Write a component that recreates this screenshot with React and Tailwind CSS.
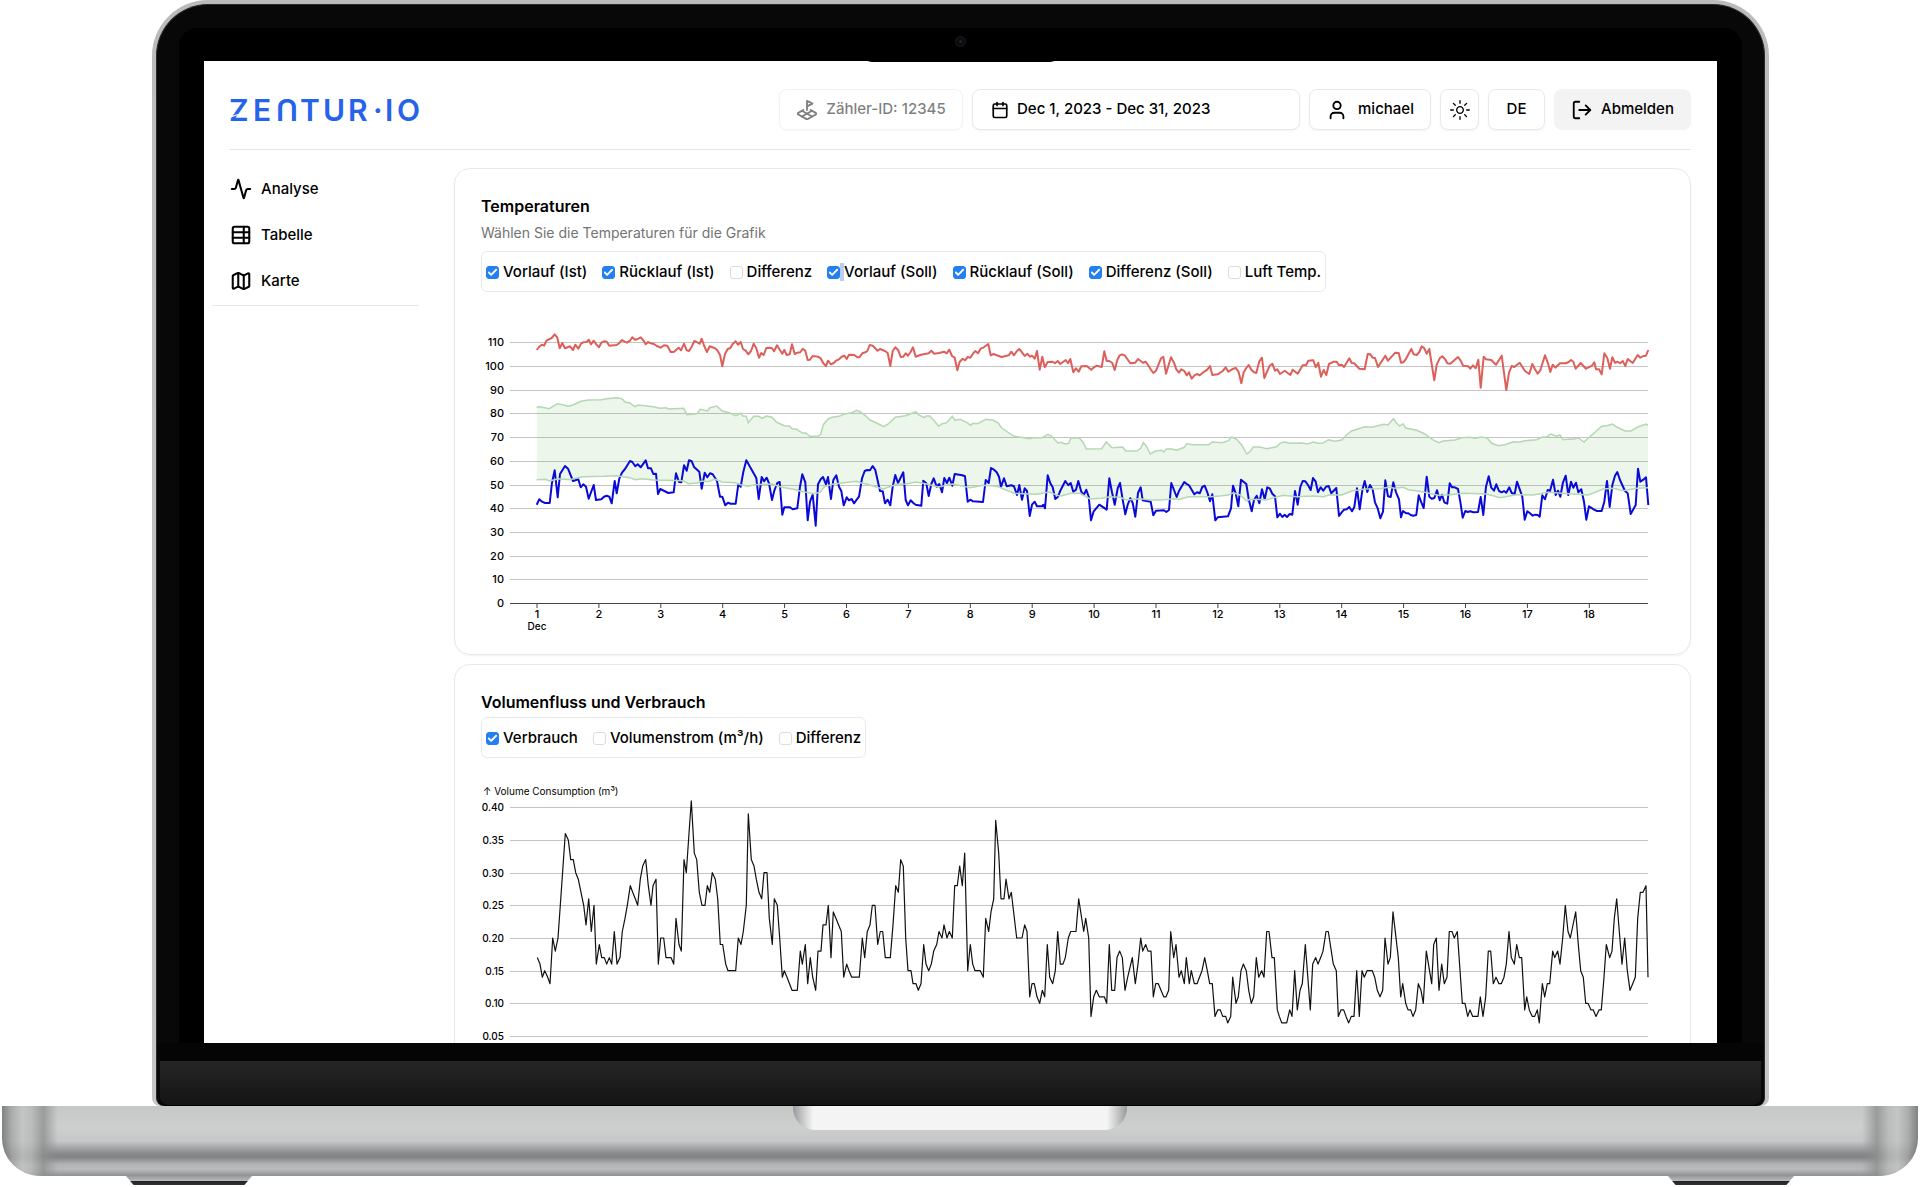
import React from "react";
import { Activity, Calendar, Check, LandPlot, LogOut, Map as MapIcon, TableProperties, User } from "lucide-react";
import { RxSun } from "react-icons/rx";

/* Each series is kept in three consecutive windows, 1170 units wide, three units to a chart pixel. */
const WINDOW = 1170;
const ORIGIN = 33;

function parse(windows) {
  return windows.flatMap((text, i) =>
    text
      .trim()
      .split(/\s+/)
      .map((pair) => {
        const [x, y] = pair.split(",").map(Number);
        return [(x + i * WINDOW - ORIGIN) / 3, y];
      })
  );
}

function line(points) {
  return "M" + points.map(([x, y]) => `${x.toFixed(1)},${y.toFixed(1)}`).join("L");
}

const third = ([x, y]) => [x, y / 3];

const flow = parse([
  `200,150 207,141 215,134 222,137 230,121 245,114 254,103 262,113 269,145 277,129 285,145 300,139 309,150 316,134 325,146 333,131 340,127 350,126 356,119 363,133 371,122 379,133 387,142 394,128 402,124 410,125 418,137 440,135 448,129 456,120 464,125 471,128 480,122 487,112 495,119 503,117 512,112 520,121 527,133 534,126 542,130 552,132 560,138 572,143 582,136 592,137 602,156 611,156 626,143 633,151 642,131 650,151 657,153 665,140 673,123 682,127 689,131 695,116 703,139 711,156 719,139 735,145 742,151 750,165 757,199 765,162 773,147 781,144 788,132 797,124 804,134 812,126 819,147 827,152 835,163 843,153 851,131 859,145 867,173 874,159 881,165 889,144 898,143 906,145 912,154 921,136 929,149 937,161 943,150 950,165 959,163 966,133 974,162 982,158 991,157 998,146 1006,152 1013,180 1020,179 1028,168 1044,170 1052,175 1060,190 1068,198 1074,182 1083,193 1091,189 1098,182 1107,178 1115,170 1123,167 1130,177 1137,164 1153,165 1162,172 1168,172`,
  `7,160 16,157 22,153 29,135 38,137 53,152 60,147 75,153 83,159 91,198 98,153 106,142 115,151 122,171 130,170 137,160 144,167 152,155 159,142 167,170 183,164 206,160 214,152 223,161 237,159 252,155 260,160 268,149 276,168 284,173 292,211 299,185 308,176 315,181 323,171 331,173 339,161 346,153 354,160 362,146 371,142 385,132 392,166 400,162 425,171 446,166 454,155 462,166 470,154 478,147 486,157 494,168 502,161 510,170 516,167 524,176 531,153 539,209 547,170 554,202 563,186 578,185 585,190 593,183 601,192 617,180 624,190 631,177 640,217 648,205 656,215 664,199 680,198 694,209 702,202 710,197 725,201 733,154 740,183 748,183 757,189 764,210 772,180 779,166 786,163 795,167 811,190 826,188 834,177 849,188 857,185 864,195 873,209 880,219 888,212 903,175 910,170 918,221 933,172 942,188 949,208 957,218 964,208 973,213 980,226 987,217 995,236 1003,227 1011,222 1019,226 1034,214 1042,209 1050,198 1057,225 1073,223 1088,213 1097,202 1105,215 1120,206 1128,204 1136,217 1144,250 1151,217 1159,204 1166,195`,
  `4,209 12,217 19,219 28,184 36,173 43,234 59,197 67,191 75,212 82,208 90,222 104,212 121,225 128,209 143,221 158,196 168,196 175,182 190,181 197,202 205,188 213,230 221,210 229,225 237,192 251,185 260,185 267,196 275,194 282,201 298,175 305,189 313,190 328,206 344,208 353,162 361,163 368,173 375,174 384,201 406,167 414,182 436,158 446,159 453,188 460,187 467,178 484,147 491,163 500,165 508,156 515,139 523,145 530,161 538,147 553,241 560,194 569,175 577,169 585,177 592,190 601,191 624,171 632,182 639,197 655,199 661,206 669,196 677,205 685,179 692,263 701,170 708,178 724,180 738,194 755,167 769,270 777,218 785,198 793,201 809,188 825,213 838,222 847,192 855,208 863,221 871,211 885,166 894,190 901,216 908,194 916,203 930,190 947,190 955,187 963,180 970,185 977,206 992,189 1008,206 1026,197 1033,187 1038,208 1047,208 1055,223 1063,160 1072,174 1080,206 1087,172 1095,188 1103,185 1110,190 1118,183 1126,198 1133,177 1148,189 1163,165 1171,173 1180,168 1188,167 1195,150`,
]).map(third);

const upper = parse([
  `200,322 209,320 224,323 238,326 262,311 278,314 294,319 309,315 333,304 355,300 394,299 410,296 440,293 456,296 465,306 480,309 494,320 505,315 550,320 570,325 588,323 595,327 641,325 651,344 682,341 690,328 712,333 720,323 740,318 757,333 780,339 797,347 812,340 819,349 829,349 835,368 851,349 866,349 877,355 890,348 906,352 920,367 943,377 958,378 966,386 980,388 998,400 1006,398 1020,409 1045,408 1052,403 1060,374 1075,356 1090,351 1108,349 1120,343 1145,338 1160,331`,
  `0,335 15,346 30,360 50,369 71,380 85,372 106,352 137,347 168,335 175,344 192,353 199,348 209,348 220,359 236,379 245,372 260,368 277,349 285,361 300,358 320,367 331,375 340,370 353,371 377,358 400,361 415,369 425,384 462,409 510,416 520,413 547,413 564,403 575,409 594,429 603,427 615,432 626,430 633,413 658,414 670,428 679,447 725,446 739,426 756,443 788,441 797,453 830,453 842,445 850,428 858,437 871,462 887,453 905,451 911,456 919,447 935,447 950,451 973,442 980,431 1000,434 1046,434 1057,426 1087,428 1105,422 1115,411 1130,418 1145,435 1160,462`,
  `0,455 10,441 30,441 50,446 65,443 80,440 90,430 103,426 120,430 155,429 173,432 189,426 205,430 220,429 235,419 255,424 275,420 290,404 305,393 345,380 365,382 402,373 414,375 430,356 440,370 449,378 459,371 467,384 500,391 525,402 535,410 553,422 567,428 580,423 615,420 635,413 660,412 675,415 695,411 712,415 725,430 745,437 765,434 790,425 805,427 825,422 860,419 875,412 892,410 902,402 920,409 930,405 940,419 960,417 970,418 985,414 1002,426 1015,414 1035,397 1055,379 1070,377 1087,372 1102,382 1125,393 1143,393 1165,380 1188,372 1194,376`,
]).map(third);

const lower = parse([
  `200,539 225,538 240,543 265,536 300,539 320,534 340,530 400,529 440,527 480,533 497,539 515,536 550,540 640,542 655,551 682,549 695,543 712,545 735,538 757,546 795,548 812,554 835,559 855,554 905,552 935,562 970,568 1000,575 1030,581 1050,577 1063,560 1090,552 1160,544`,
  `0,548 20,552 50,562 70,567 110,553 137,552 168,546 200,552 235,561 277,552 331,563 370,556 410,559 462,580 530,583 567,576 600,589 633,580 660,580 690,597 725,595 750,590 780,592 800,600 840,596 870,600 905,600 940,596 960,598 985,590 1050,590 1080,588 1105,585 1120,578 1140,585 1160,603`,
  `0,598 50,599 100,586 140,590 190,588 220,590 240,584 275,585 305,573 345,567 390,566 415,562 435,565 460,562 475,569 510,574 565,586 600,584 640,580 710,582 750,593 800,584 850,585 895,577 935,580 980,583 1015,585 1060,567 1090,565 1120,572 1160,565 1194,563`,
]).map(third);

const returnFlow = parse([
  `200,614 208,598 216,605 225,609 239,609 246,548 254,511 263,592 270,522 285,498 294,506 309,543 325,538 332,562 340,553 348,560 356,596 371,555 378,600 394,598 402,590 410,587 418,590 425,610 434,543 440,580 448,536 456,518 465,507 480,483 487,486 496,499 503,493 512,502 527,481 534,505 543,505 550,522 558,521 564,582 571,567 595,579 611,577 618,520 627,546 634,547 642,496 650,512 657,481 665,484 673,502 688,515 695,566 704,518 712,532 720,520 728,523 741,543 750,590 757,590 766,616 774,608 782,611 797,611 805,553 812,560 820,516 829,481 859,534 866,597 875,531 882,544 890,533 897,550 906,600 913,572 922,549 929,546 937,644 943,622 960,622 968,628 982,625 990,560 997,523 1006,547 1013,661 1020,605 1028,584 1037,677 1044,553 1052,538 1059,531 1068,553 1074,531 1083,597 1090,540 1099,526 1107,560 1114,573 1121,616 1130,592 1137,601 1145,597 1152,610 1160,599 1167,590`,
  `6,535 14,513 22,510 30,511 38,498 46,510 60,573 68,574 75,610 83,599 91,616 98,560 106,525 114,549 130,517 137,600 144,616 152,601 160,609 167,614 184,617 190,542 199,550 206,588 214,552 221,535 230,560 238,552 246,577 253,534 261,549 268,533 277,557 284,522 307,526 315,529 323,605 331,599 339,604 369,606 377,540 386,549 393,504 402,509 410,517 417,530 423,560 432,535 440,559 454,556 462,559 471,585 478,555 486,599 494,565 501,573 509,648 516,614 524,605 531,619 546,619 550,614 555,625 563,526 571,550 578,562 586,597 594,590 601,572 616,543 625,556 632,549 640,575 648,569 655,543 664,575 671,585 679,569 686,590 693,661 701,634 718,614 740,629 748,535 756,577 764,614 773,565 780,549 787,592 796,643 803,614 811,595 818,609 826,650 834,579 842,562 848,601 872,605 880,646 888,632 912,631 919,636 927,630 934,549 950,591 957,573 973,546 980,552 987,556 1003,583 1011,577 1019,580 1027,561 1034,557 1042,577 1050,604 1057,583 1066,661 1073,652 1104,649 1113,625 1119,557 1127,580 1135,619 1143,539 1159,552 1166,597`,
  `5,634 12,600 20,587 28,610 36,568 44,598 52,562 59,565 67,581 75,589 82,652 90,641 97,651 104,644 111,651 119,642 127,644 135,573 143,614 151,561 158,543 166,544 174,555 182,570 189,534 197,545 204,577 212,562 220,572 228,560 236,558 244,580 259,564 267,648 275,637 282,629 290,628 298,621 306,634 313,621 321,565 329,628 337,571 344,543 352,576 360,555 368,569 375,607 383,625 391,655 399,635 406,541 414,589 422,591 430,547 438,577 447,598 453,652 459,633 468,640 475,640 482,645 490,647 499,645 506,586 514,607 521,624 530,530 538,590 545,596 553,594 561,571 569,601 576,584 583,607 592,611 599,550 606,562 614,562 624,567 631,605 638,653 646,633 653,636 661,634 670,637 684,636 692,591 700,645 708,560 716,529 724,563 732,572 739,553 747,573 755,577 762,573 769,578 778,562 785,579 794,581 801,545 817,590 824,659 832,634 840,640 848,647 855,644 863,645 869,650 877,586 885,598 893,570 900,573 909,539 917,585 924,572 931,590 939,547 947,527 955,585 963,545 970,563 978,548 985,577 994,568 1002,605 1009,659 1017,619 1032,629 1041,633 1055,633 1063,605 1071,543 1079,621 1087,556 1095,527 1102,516 1110,540 1125,573 1133,580 1142,642 1157,615 1164,506 1171,545 1180,539 1188,532 1195,615`,
]).map(third);

/* Consumption in hundredths of a cubic metre. */
const volume = parse([
  `202,17 210,16 217,14 224,15 233,14 240,13 248,20 256,18 264,20 271,25 286,36 295,35 302,32 310,32 317,30 325,29 333,27 341,25 348,22 356,26 364,21 372,25 379,16 388,19 395,17 403,17 410,16 418,17 425,16 433,21 441,16 450,17 457,21 465,23 472,25 481,28 488,27 496,26 503,25 511,29 518,31 527,32 535,28 543,25 549,28 558,29 565,16 572,20 581,20 588,17 603,17 611,16 618,23 627,19 634,18 642,32 649,30 657,36 664,41 673,33 680,32 688,27 696,25 705,25 712,28 719,27 727,30 736,29 743,26 751,19 758,19 767,16 774,15 797,15 805,20 813,19 820,21 829,25 835,39 844,32 852,31 859,29 867,27 875,26 882,30 891,30 898,23 907,19 913,26 922,25 929,20 937,14 943,15 951,14 966,12 982,12 991,18 997,16 1006,19 1013,13 1021,17 1028,14 1037,12 1044,18 1053,18 1059,22 1068,22 1075,25 1083,17 1090,24 1098,23 1114,21 1121,14 1130,16 1137,15 1145,14 1168,14`,
  `7,20 14,17 22,21 30,22 37,25 45,25 53,19 61,21 68,21 76,17 91,17 99,22 107,28 115,27 122,32 130,31 137,20 144,15 153,15 159,13 168,13 175,12 183,13 191,19 198,16 206,15 214,16 221,18 230,19 237,21 246,20 252,22 261,20 268,21 277,20 284,28 292,28 299,31 307,28 314,33 323,15 331,19 338,16 345,15 361,15 370,14 377,23 386,21 393,24 401,26 407,38 416,33 423,26 432,26 438,29 447,26 454,27 470,20 486,20 494,22 501,21 509,11 516,13 523,13 531,11 539,10 547,12 554,11 562,19 569,14 578,13 586,15 593,21 601,16 609,16 616,17 625,20 632,21 648,21 656,26 671,21 677,23 686,20 693,8 701,11 709,12 718,11 733,11 740,10 748,19 755,12 764,12 771,17 779,18 787,17 795,12 803,14 817,17 826,13 834,16 842,20 848,18 857,19 864,18 873,18 880,11 887,13 895,13 903,12 911,11 918,11 926,12 932,21 941,17 948,19 957,14 964,15 973,13 979,17 988,13 994,15 1003,13 1011,13 1026,15 1034,17 1042,15 1049,13 1057,13 1065,8 1073,9 1081,9 1088,8 1097,8 1103,7 1112,8 1118,14 1128,10 1135,11 1143,15 1150,16 1159,15 1166,12`,
  `4,10 11,11 19,17 26,14 35,15 42,14 50,21 57,21 66,17 73,17 82,9 88,8 95,7 110,7 119,9 126,8 134,15 142,9 150,12 157,13 166,19 181,9 188,16 197,17 204,16 212,17 219,18 228,21 235,21 250,16 259,15 265,8 273,9 281,9 288,8 296,7 304,8 312,8 320,15 328,8 336,15 343,14 351,15 367,15 374,14 382,12 390,11 398,12 405,20 414,16 421,17 429,24 445,17 452,11 458,13 467,10 474,9 482,9 489,8 497,9 505,13 513,12 520,10 529,18 545,13 551,19 559,20 567,12 575,16 583,13 591,14 598,21 606,21 613,20 622,21 637,10 645,10 653,8 660,9 668,8 684,8 691,11 699,8 707,11 715,18 722,18 730,13 738,14 747,13 754,13 762,14 769,16 777,21 784,17 793,16 800,19 808,17 815,17 824,9 830,11 838,9 847,8 854,8 862,9 868,7 877,13 884,11 892,13 899,13 908,18 914,17 923,18 930,16 938,20 946,25 954,21 961,20 977,24 985,19 992,15 1000,14 1007,10 1014,10 1023,9 1030,9 1038,8 1047,9 1054,9 1062,14 1069,19 1079,17 1086,18 1093,23 1100,26 1108,21 1116,16 1124,20 1132,15 1140,12 1148,13 1156,14 1163,23 1171,27 1179,27 1188,28 1194,14`,
]).map(([x, v]) => [x, (866 - v * 19.6) / 3]);

const DAYS = Array.from({ length: 18 }, (_, i) => i + 1);
const DEGREES = Array.from({ length: 12 }, (_, i) => i * 10);
const VOLUMES = [0.4, 0.35, 0.3, 0.25, 0.2, 0.15, 0.1, 0.05];
const dayX = (d) => 56 + (d - 1) * 61.9;
const degreeY = (t) => 303 - t * 2.37;
const volumeY = (v) => (866 - v * 1960) / 3;

function GridLine({ y }) {
  return <line x1="29" x2="1167" y1={y} y2={y} stroke="#c4c4c4" strokeWidth="1" />;
}

function AxisLabel({ y, children }) {
  return (
    <text x="23" y={y + 4} textAnchor="end" className="fill-black text-[11px] font-medium">
      {children}
    </text>
  );
}

function TemperatureChart() {
  return (
    <svg viewBox="0 0 1183 332" className="mt-2 block w-full" role="img" aria-label="Temperaturen">
      {DEGREES.map((t) => (
        <g key={t}>
          {t > 0 && <GridLine y={Math.round(degreeY(t)) + 0.5} />}
          <AxisLabel y={degreeY(t)}>{t}</AxisLabel>
        </g>
      ))}
      <path d={line(upper) + "L" + line([...lower].reverse()).slice(1) + "Z"} fill="#48a838" fillOpacity="0.1" />
      <path d={line(flow)} fill="none" stroke="#dd5f5a" strokeWidth="2" strokeLinejoin="round" />
      <path d={line(returnFlow)} fill="none" stroke="#0a0ad8" strokeWidth="2" strokeLinejoin="round" />
      <path d={line(upper)} fill="none" stroke="#b4d8b2" strokeWidth="1.5" />
      <path d={line(lower)} fill="none" stroke="#b4d8b2" strokeWidth="1.5" />
      <line x1="29" x2="1167" y1="303.5" y2="303.5" stroke="#444" strokeWidth="1" />
      {DAYS.map((d) => (
        <g key={d}>
          <line x1={dayX(d)} x2={dayX(d)} y1="303" y2="308" stroke="#444" strokeWidth="1" />
          <text x={dayX(d)} y="318" textAnchor="middle" className="fill-black text-[11px] font-medium">
            {d}
          </text>
        </g>
      ))}
      <text x="56" y="330" textAnchor="middle" className="fill-black text-[10px] font-medium">
        Dec
      </text>
    </svg>
  );
}

function VolumeChart() {
  return (
    <svg viewBox="0 0 1183 263" className="mt-[22px] block w-full" role="img" aria-label="Volume Consumption">
      <text x="2" y="15" className="fill-black text-[10px]">
        ↑ Volume Consumption (m³)
      </text>
      {VOLUMES.map((v) => (
        <g key={v}>
          <GridLine y={Math.round(volumeY(v)) + 0.5} />
          <text x="23" y={volumeY(v) + 4} textAnchor="end" className="fill-black text-[10px] font-medium">
            {v.toFixed(2)}
          </text>
        </g>
      ))}
      <path d={line(volume)} fill="none" stroke="#111" strokeWidth="1.2" strokeLinejoin="round" />
    </svg>
  );
}

function Option({ label, checked, marked }) {
  return (
    <label className="flex items-center">
      <span className="grid place-items-center">
        <input
          type="checkbox"
          defaultChecked={checked}
          className="peer col-start-1 row-start-1 size-[13px] appearance-none rounded-[3px] border border-[#dcdcdc] bg-white checked:border-[#2380f0] checked:bg-[#2380f0]"
        />
        <Check className="pointer-events-none col-start-1 row-start-1 hidden size-[11px] text-white peer-checked:block" strokeWidth={4} />
      </span>
      <span className={marked ? "h-[18px] w-1 bg-[#b9cdf7]" : "h-[18px] w-1"} />
      {label}
    </label>
  );
}

function Options({ items }) {
  return (
    <div className="flex w-fit items-center gap-[15px] rounded-md border border-[#e9e9e9] px-1 pt-[9px] pb-2 text-[15px] leading-[22px] font-medium whitespace-nowrap">
      {items.map((item) => (
        <Option key={item.label} {...item} />
      ))}
    </div>
  );
}

const button =
  "flex h-[41px] items-center rounded-lg border border-[#e9e9e9] bg-white text-[15px] font-medium whitespace-nowrap shadow-xs";

function Logo() {
  return (
    <svg viewBox="0 0 192 26" className="h-[26px] w-48 overflow-visible" role="img" aria-label="ZENTUR.IO">
      <g className="fill-[#2563eb] text-[30px] font-semibold">
        <text y="24" x="0 24">ZE</text>
        <text y="24" x="58" textAnchor="middle" transform="rotate(180 58 13)">U</text>
        <text y="24" x="71 94 119 144 156 168">TUR·IO</text>
      </g>
      <path d="M0 20.5 9 17.5" stroke="#fff" strokeWidth="1.2" />
    </svg>
  );
}

function Header() {
  return (
    <header className="mr-[26px] ml-[25px] flex items-center border-b border-[#e5e5e5] pt-7 pb-[19px]">
      <a href="#home" className="mr-auto">
        <Logo />
      </a>
      <div className="flex gap-[9px]">
        <button disabled className={`${button} w-[184px] justify-center gap-2 opacity-50`}>
          <LandPlot className="size-[22px]" />
          Zähler-ID: 12345
        </button>
        <button className={`${button} w-[328px] gap-2 px-[18px]`}>
          <Calendar className="size-[18px]" strokeWidth={2.25} />
          Dec 1, 2023 - Dec 31, 2023
        </button>
        <button className={`${button} w-[122px] justify-center gap-2.5`}>
          <User className="size-[22px]" />
          michael
        </button>
        <button aria-label="Farbschema" className={`${button} w-[39px] justify-center`}>
          <RxSun className="size-5" />
        </button>
        <button className={`${button} w-[57px] justify-center`}>DE</button>
        <button className="flex h-[41px] w-[137px] items-center justify-center gap-2 rounded-lg bg-[#f3f3f3] text-[15px] font-medium">
          <LogOut className="size-[22px]" />
          Abmelden
        </button>
      </div>
    </header>
  );
}

const links = [
  { label: "Analyse", Icon: Activity },
  { label: "Tabelle", Icon: TableProperties },
  { label: "Karte", Icon: MapIcon },
];

function Sidebar() {
  return (
    <nav className="mt-4 ml-2 w-[207px] shrink-0 self-start border-b border-[#e8e8e8] pb-px">
      {links.map(({ label, Icon }) => (
        <a key={label} href={`#${label.toLowerCase()}`} className="flex h-[46px] items-center gap-[9px] pl-[18px] text-[15px] font-medium">
          <Icon className="size-[22px]" strokeWidth={2.25} />
          {label}
        </a>
      ))}
    </nav>
  );
}

function App() {
  return (
    <div className="overflow-hidden bg-white font-['Inter',sans-serif] text-black">
      <div className="mr-[151px] ml-[152px] rounded-t-[56px] rounded-b-lg bg-linear-to-b from-[#b9bcba] to-[#c4c6c6] px-1 pt-1">
        <div className="rounded-t-[52px] rounded-b-lg border border-b-0 border-[#2a2a2a] bg-[#080808]">
          <div className="relative mx-[22px] mt-[23px] rounded-t-[18px] bg-black px-[25px] pt-[33px]">
            <div className="absolute inset-x-0 top-0 mx-auto h-[34px] w-[194px] rounded-b-lg bg-black">
              <span className="mx-auto mt-2 block size-[11px] rounded-full border border-[#1c1c1c] bg-[#0b0b12] p-[3px]">
                <span className="block size-[3px] rounded-full bg-[#24242c]" />
              </span>
            </div>
            <div className="bg-white">
              <Header />
              <div className="mr-[26px] flex gap-[35px]">
                <Sidebar />
                <main className="mt-[18px] min-w-0 flex-1">
                  <section className="rounded-2xl border border-[#e8e8e8] px-[26px] pt-[26px] pb-[22px] shadow-xs">
                    <h2 className="text-base leading-[22px] font-semibold">Temperaturen</h2>
                    <p className="mt-1 mb-1.5 text-sm leading-6 text-[#737373]">Wählen Sie die Temperaturen für die Grafik</p>
                    <Options
                      items={[
                        { label: "Vorlauf (Ist)", checked: true },
                        { label: "Rücklauf (Ist)", checked: true },
                        { label: "Differenz" },
                        { label: "Vorlauf (Soll)", checked: true, marked: true },
                        { label: "Rücklauf (Soll)", checked: true },
                        { label: "Differenz (Soll)", checked: true },
                        { label: "Luft Temp." },
                      ]}
                    />
                    <TemperatureChart />
                  </section>
                  <section className="mt-[9px] rounded-t-2xl border border-b-0 border-[#e8e8e8] px-[26px] pt-[26px]">
                    <h2 className="mb-1 text-base leading-[22px] font-semibold">Volumenfluss und Verbrauch</h2>
                    <Options
                      items={[
                        { label: "Verbrauch", checked: true },
                        { label: "Volumenstrom (m³/h)" },
                        { label: "Differenz" },
                      ]}
                    />
                    <VolumeChart />
                  </section>
                </main>
              </div>
            </div>
          </div>
          <div className="h-[18px] bg-[#050505]" />
          <div className="mx-[3px] h-[45px] rounded-b-lg border-b border-black bg-linear-to-b from-[#262626] to-[#141414]" />
        </div>
      </div>
      <div className="mx-0.5 h-[70px] overflow-hidden rounded-b-[38px] bg-[linear-gradient(to_bottom,#c6c8c8_0%,#cdcfce_30%,#c6c8c9_50%,#87898b_68%,#808284_73%,#b0b2b4_83%,#b9bbbd_90%,#8e9092_100%)]">
        <div className="flex h-full items-start justify-between">
          <div className="h-full w-14 bg-[linear-gradient(to_right,#6e7070_0%,#a5a7a7_18%,#c2c4c4_36%,#b8baba_52%,#8e9090_74%,transparent_100%)] opacity-80" />
          <div className="h-6 w-[334px] rounded-b-[22px] bg-[linear-gradient(to_right,#97999b_0,#c9c9cc_3%,#f4f4f4_6%,#f4f4f4_94%,#c9c9cc_97%,#97999b_100%)]" />
          <div className="h-full w-14 bg-[linear-gradient(to_left,#6e7070_0%,#a5a7a7_18%,#c2c4c4_36%,#b8baba_52%,#8e9090_74%,transparent_100%)] opacity-80" />
        </div>
      </div>
      <div className="mx-[126px] flex justify-between">
        <div className="h-[9px] w-[126px] bg-[linear-gradient(to_bottom,#97999b_0,#b5b7b9_50%,#222_50%,#333_100%)] [clip-path:polygon(0_0,100%_0,94%_100%,6%_100%)]" />
        <div className="h-[9px] w-[126px] bg-[linear-gradient(to_bottom,#97999b_0,#b5b7b9_50%,#222_50%,#333_100%)] [clip-path:polygon(0_0,100%_0,94%_100%,6%_100%)]" />
      </div>
    </div>
  );
}

export default App;
